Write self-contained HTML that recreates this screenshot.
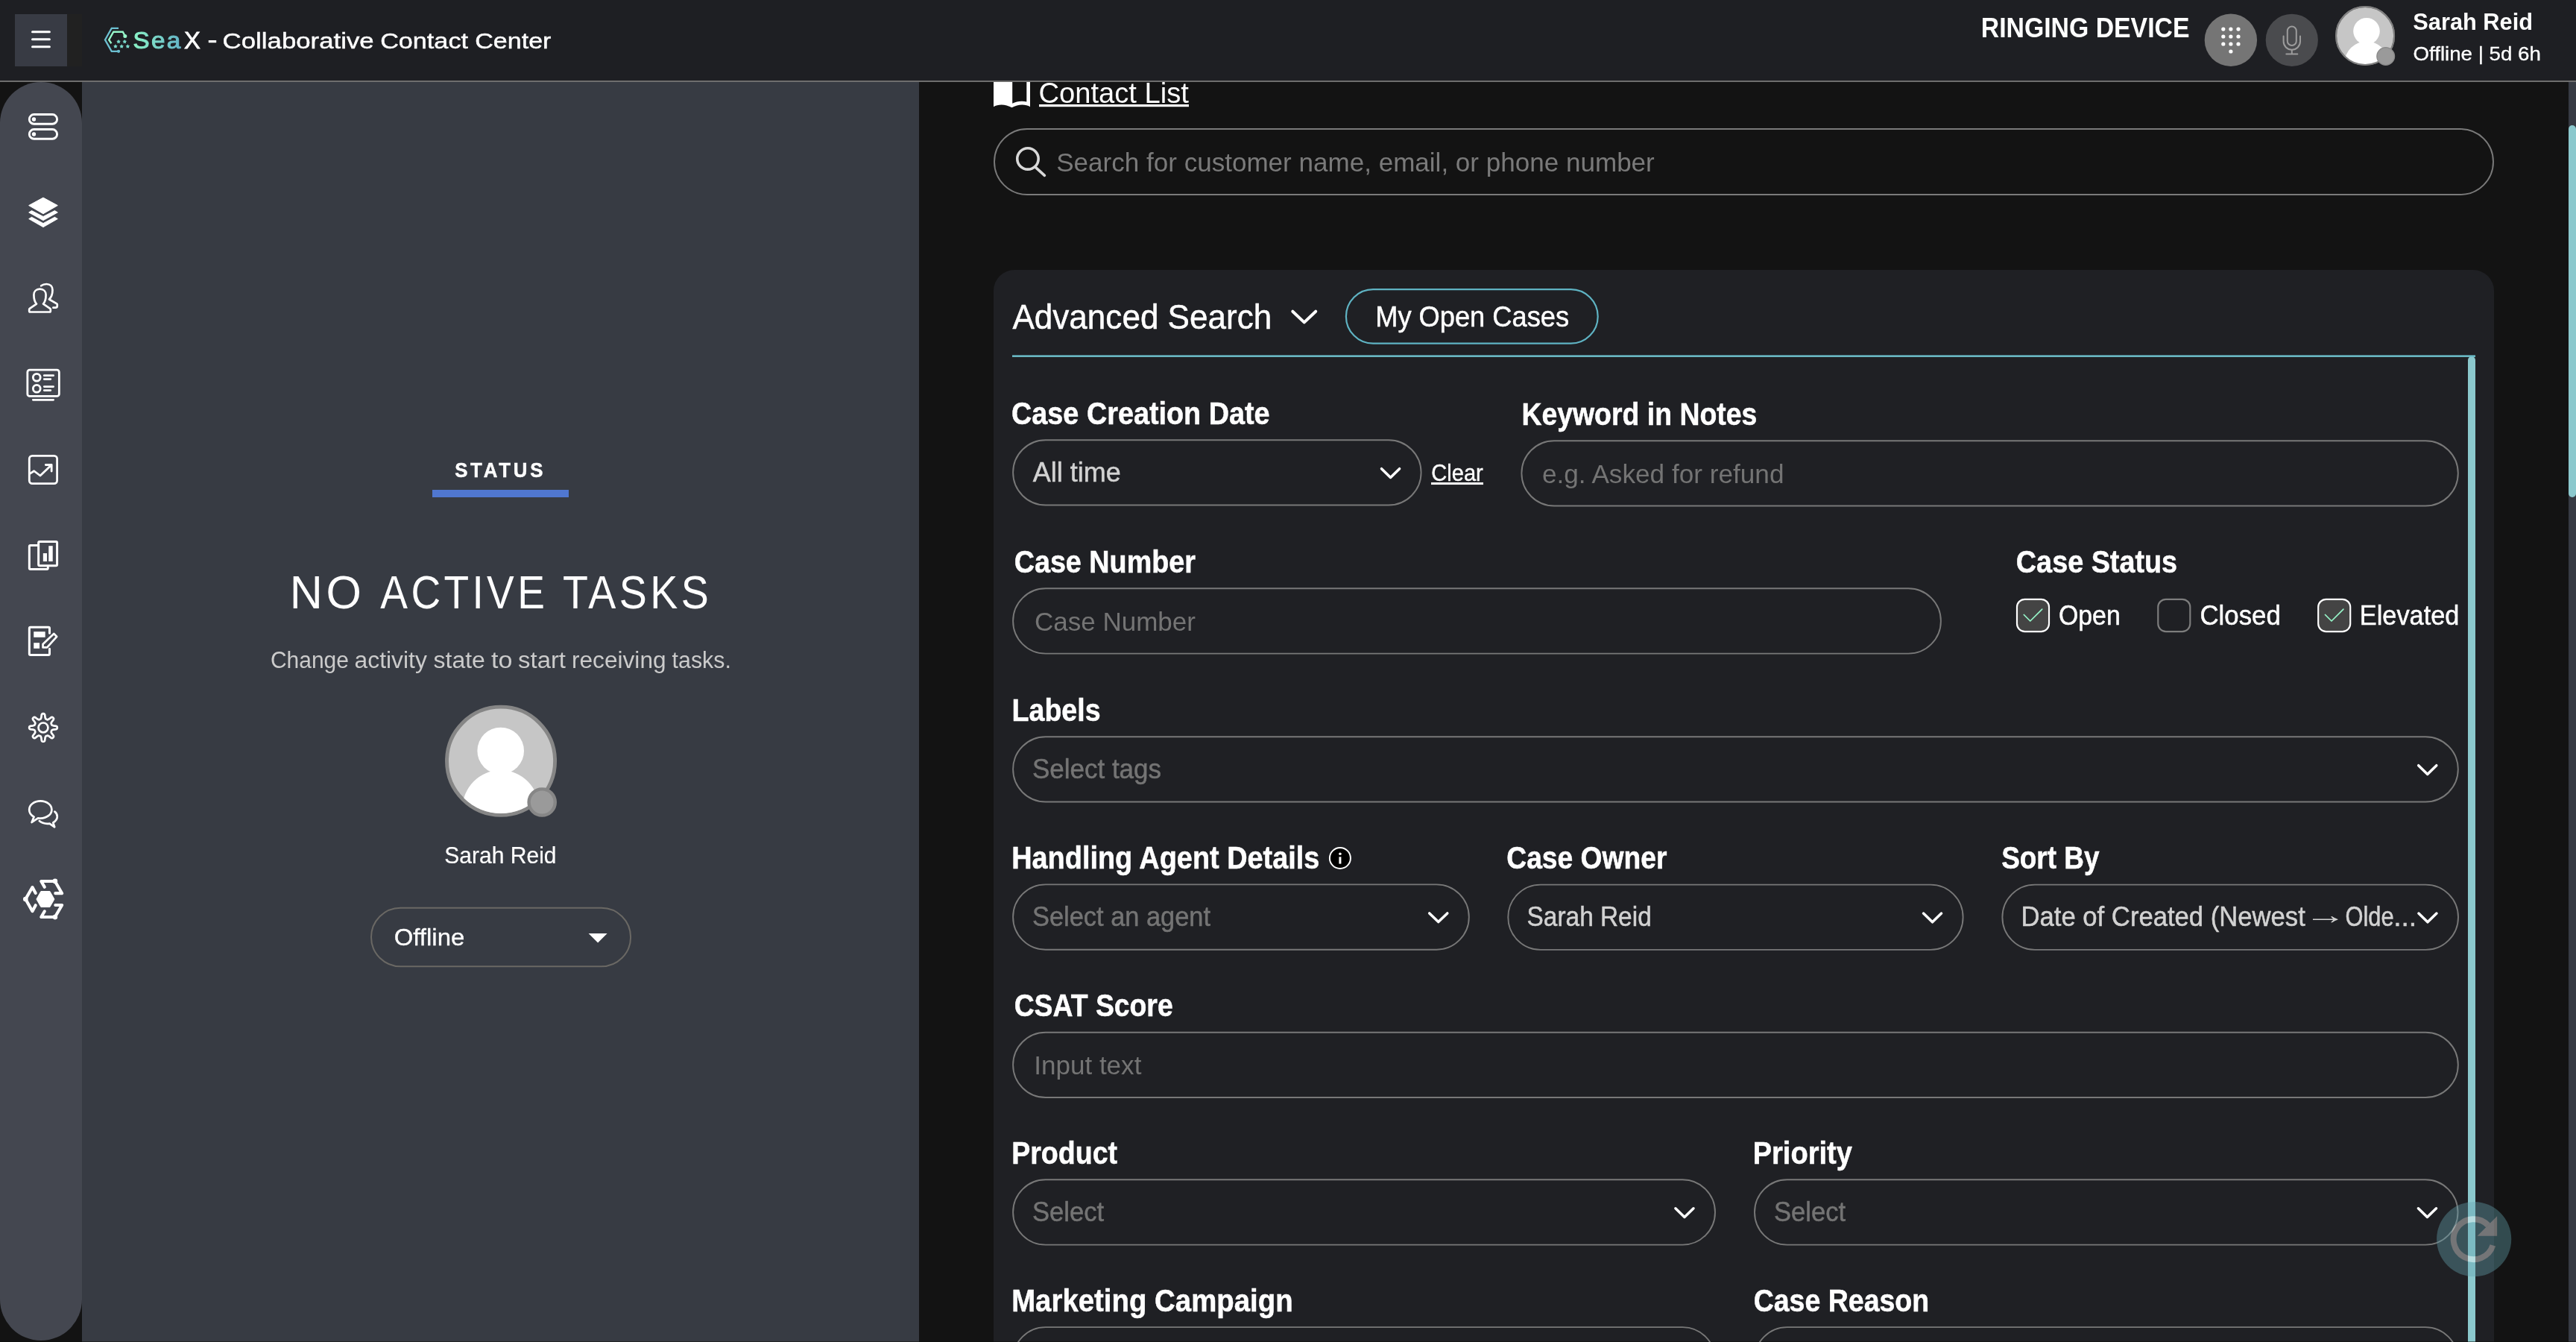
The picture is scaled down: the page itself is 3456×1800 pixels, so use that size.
<!DOCTYPE html>
<html><head><meta charset="utf-8"><title>SeaX - Collaborative Contact Center</title>
<style>
html,body{margin:0;padding:0}
body{width:3456px;height:1800px;overflow:hidden;background:#131313;position:relative;font-family:"Liberation Sans",sans-serif}
.b{position:absolute}
.t{position:absolute;left:0;top:0;white-space:pre;line-height:1;transform-origin:0 0;font-family:"Liberation Sans",sans-serif}
#ov{position:absolute;left:0;top:0}
</style></head><body>
<!-- right panel scrollbar -->
<div class="b" style="left:3446px;top:110px;width:10px;height:1690px;background:#363a43"></div>
<div class="b" style="left:3446px;top:168px;width:10px;height:499px;border-radius:5px;background:#8bc8cd"></div>
<!-- card -->
<div class="b" style="left:1333px;top:362px;width:2013px;height:1500px;border-radius:28px;background:#1f2024"></div>
<div class="b" style="left:3311px;top:478px;width:10px;height:1400px;border-radius:5px;background:#8bc8cd"></div>
<!-- left panel -->
<div class="b" style="left:110px;top:110px;width:1123px;height:1690px;background:#373b43"></div>
<div class="b" style="left:580px;top:657px;width:183px;height:10px;background:#5077d0"></div>
<!-- sidebar -->
<div class="b" style="left:0;top:110px;width:110px;height:1690px;background:#131313"></div>
<div class="b" style="left:0;top:110px;width:110px;height:1688px;border-radius:55px;background:#444750"></div>
<!-- header -->
<div class="b" style="left:0;top:0;width:3456px;height:108px;background:#1e1f23"></div>
<div class="b" style="left:0;top:108px;width:3456px;height:2px;background:#6e6e6e"></div>
<div class="b" style="left:20px;top:19px;width:70px;height:70px;background:#383b44"></div>
<div class="b" style="left:90px;top:19px;width:20px;height:70px;background:#212121"></div>
<div class="b" style="left:0;top:1799px;width:3456px;height:1px;background:rgba(12,14,8,.5)"></div>
<svg id="ov" width="3456" height="1800" viewBox="0 0 3456 1800" fill="none">
<line x1="43.5" y1="42.8" x2="66.4" y2="42.8" stroke="#fff" stroke-width="3" stroke-linecap="round"/>
<line x1="43.5" y1="52.7" x2="66.4" y2="52.7" stroke="#fff" stroke-width="3" stroke-linecap="round"/>
<line x1="43.5" y1="62.7" x2="66.4" y2="62.7" stroke="#fff" stroke-width="3" stroke-linecap="round"/>
<defs><linearGradient id="lg" x1="0" y1="0" x2="1" y2="0"><stop offset="0" stop-color="#8cf5c8"/><stop offset="1" stop-color="#64b4c8"/></linearGradient></defs>
<path d="M159.04 37.94 L149.74 37.94 L140.97 53.43 L149.74 68.8 L158.7 68.8" stroke="#6cbfd0" stroke-width="2.3" stroke-linejoin="miter"/>
<circle cx="159.04" cy="68.8" r="2.15" fill="#6cbfd0"/>
<path d="M167.8 48.42 L164.76 42.7 L152.24 42.7 L146.16 53.43 L149.38 58.25" stroke="#96f5c8" stroke-width="2.4" stroke-linejoin="miter"/>
<circle cx="167.8" cy="48.42" r="2.5" fill="#96f5c8"/>
<polygon points="159.04,52.90 160.03,54.44 161.80,54.90 160.64,56.32 160.74,58.15 159.04,57.48 157.34,58.15 157.44,56.32 156.28,54.90 158.05,54.44" fill="#78d7c8"/>
<polygon points="167.26,52.90 168.25,54.44 170.02,54.90 168.86,56.32 168.96,58.15 167.26,57.48 165.56,58.15 165.66,56.32 164.50,54.90 166.27,54.44" fill="#78d7c8"/>
<polygon points="154.92,59.35 155.91,60.89 157.68,61.35 156.52,62.77 156.62,64.60 154.92,63.93 153.22,64.60 153.32,62.77 152.16,61.35 153.93,60.89" fill="#78d7c8"/>
<polygon points="163.15,59.35 164.14,60.89 165.91,61.35 164.75,62.77 164.85,64.60 163.15,63.93 161.45,64.60 161.55,62.77 160.39,61.35 162.16,60.89" fill="#78d7c8"/>
<polygon points="171.37,59.35 172.36,60.89 174.13,61.35 172.97,62.77 173.07,64.60 171.37,63.93 169.67,64.60 169.77,62.77 168.61,61.35 170.38,60.89" fill="#78d7c8"/>
<rect x="279.75" y="53.9" width="10.45" height="3.4" rx="0.6" fill="#fff"/>
<circle cx="2992.9" cy="53.8" r="35.2" fill="#757575"/>
<circle cx="2982.8" cy="39.1" r="2.6" fill="#fff"/>
<circle cx="2982.8" cy="49.0" r="2.6" fill="#fff"/>
<circle cx="2982.8" cy="59.0" r="2.6" fill="#fff"/>
<circle cx="2992.9" cy="39.1" r="2.6" fill="#fff"/>
<circle cx="2992.9" cy="49.0" r="2.6" fill="#fff"/>
<circle cx="2992.9" cy="59.0" r="2.6" fill="#fff"/>
<circle cx="3003.0" cy="39.1" r="2.6" fill="#fff"/>
<circle cx="3003.0" cy="49.0" r="2.6" fill="#fff"/>
<circle cx="3003.0" cy="59.0" r="2.6" fill="#fff"/>
<circle cx="2992.9" cy="69" r="2.6" fill="#fff"/>
<circle cx="3074.8" cy="53.8" r="35.1" fill="#4a4b4e"/>
<g stroke="#9c9c9c" stroke-width="2" stroke-linecap="round"><rect x="3068.8" y="35.5" width="12" height="25.5" rx="6"/><path d="M3063.6 48.5 L3063.6 55.5 A11.2 11.2 0 0 0 3086 55.5 L3086 48.5"/><path d="M3074.8 67 L3074.8 72.5 M3067.3 72.5 L3082.3 72.5"/></g>
<defs><clipPath id="c1"><circle cx="3173.1" cy="48" r="39"/></clipPath><clipPath id="c2"><circle cx="672.05" cy="1020.7" r="70.3"/></clipPath></defs>
<circle cx="3173.1" cy="48" r="39" fill="#c6c6c6" stroke="#808080" stroke-width="2"/>
<g clip-path="url(#c1)"><circle cx="3175" cy="41.8" r="17.8" fill="#fff"/><ellipse cx="3175" cy="84.5" rx="29.5" ry="29" fill="#fff"/></g>
<circle cx="3173.1" cy="48" r="39" stroke="#808080" stroke-width="2"/>
<circle cx="3200.7" cy="75.5" r="11.8" fill="#9a9a9a" stroke="#8b8b8b" stroke-width="1.4"/>
<circle cx="672.05" cy="1020.7" r="72.55" fill="#c6c6c6" stroke="#868686" stroke-width="4.9"/>
<g clip-path="url(#c2)"><circle cx="671.7" cy="1007" r="31.3" fill="#fff"/><ellipse cx="671.8" cy="1085" rx="51.5" ry="52" fill="#fff"/></g>
<circle cx="727.2" cy="1076" r="17.6" fill="#9a9a9a" stroke="#868686" stroke-width="4.4"/>
<rect x="498" y="1217.7" width="348.1" height="78.6" rx="39.3" stroke="#6a6864" stroke-width="2"/>
<polygon points="789.6,1251.9 814.6,1251.9 802.1,1264.4" fill="#fff"/>
<rect x="39.3" y="153.55" width="37.3" height="12.7" rx="6.35" stroke="#fff" stroke-width="2.9"/>
<circle cx="45.45" cy="160.0" r="2.7" fill="#fff"/>
<rect x="39.3" y="173.55" width="37.3" height="12.7" rx="6.35" stroke="#fff" stroke-width="2.9"/>
<circle cx="45.45" cy="179.95" r="2.7" fill="#fff"/>
<g fill="#fff" stroke="#fff" stroke-width="1" stroke-linejoin="round"><polygon points="57.98,265.1 77.3,275.6 57.98,286.7 38.65,275.6"/><polygon points="38.7,284.9 42.5,282.6 57.98,290.5 73.4,282.6 77.3,284.9 57.98,295.6"/><polygon points="38.7,293.55 42.5,291.3 57.98,299.6 73.4,291.3 77.3,293.55 57.98,304.6"/></g>
<g stroke="#fff" stroke-linecap="round" stroke-linejoin="round" stroke-width="2.7"><path d="M53.5 387.7 C48.5 387.7 45.4 391 45.4 395.5 C45.4 401 46.6 405 49 407.6 L39.8 413.9 Q39.2 414.3 39.2 415 L39.2 417.3 Q39.2 418.5 40.4 418.5 L66.6 418.5 Q67.8 418.5 67.8 417.3 L67.8 415 Q67.8 414.3 67.2 413.9 L58 407.6 C60.4 405 61.6 401 61.6 395.5 C61.6 391 58.5 387.7 53.5 387.7 Z"/><path d="M55.2 383.3 C57.2 381.7 59.6 381 62.4 381 C67.5 381 70.5 384.5 70.5 389 C70.5 394.5 69 398.5 66 401.5 L76.2 407.3 Q76.8 407.7 76.8 408.5 L76.8 410.3 Q76.8 412.7 74.5 412.7 L71.4 412.7"/></g>
<g stroke="#fff" stroke-linecap="round" stroke-linejoin="round" stroke-width="2.8"><rect x="36.85" y="496.2" width="42.5" height="35.2" rx="3"/><circle cx="49.26" cy="506.24" r="4.9"/><circle cx="49.26" cy="521.2" r="4.9"/><path d="M59.3 503.7 L71.6 503.7 M59.3 508.6 L67.8 508.6 M59.3 518.6 L71.6 518.6 M59.3 523.55 L67.8 523.55 M44.3 536.3 L71.6 536.3"/></g>
<g stroke="#fff" stroke-linecap="round" stroke-linejoin="round" stroke-width="2.8"><rect x="39.3" y="611.3" width="37.3" height="37.3" rx="4"/><path d="M39.6 635.6 L45.7 631.75 L53.95 638 L69.16 623.5 M61.3 623.5 L69.16 623.5 L69.16 632"/></g>
<g stroke="#fff" stroke-linecap="round" stroke-linejoin="round" stroke-width="3"><rect x="51.65" y="726.4" width="24.95" height="32.3" rx="1.5"/><path d="M50.15 731.5 L40.85 731.5 Q39.35 731.5 39.35 733 L39.35 762.1 Q39.35 763.6 40.85 763.6 L62.8 763.6 Q64.3 763.6 64.3 762.1 L64.3 760.4"/></g>
<rect x="57.84" y="742.06" width="5.2" height="10.95" fill="#fff"/><rect x="65.27" y="732.2" width="5.45" height="20.8" fill="#fff"/>
<g stroke="#fff" stroke-linecap="round" stroke-linejoin="round" stroke-width="3"><path d="M66.5 849.3 L66.5 842.8 Q66.5 841.3 65 841.3 L40.85 841.3 Q39.35 841.3 39.35 842.8 L39.35 877.1 Q39.35 878.6 40.85 878.6 L65 878.6 Q66.5 878.6 66.5 877.1 L66.5 870.3"/></g>
<path stroke="#fff" stroke-linecap="round" stroke-linejoin="round" stroke-width="2.7" d="M57.55 868.45 L57.55 863.9 L72.3 850 L76.2 853.9 L63.2 868.45 Z"/>
<rect x="45.23" y="847.2" width="15.43" height="7.6" fill="#fff"/><rect x="45.23" y="862.2" width="7.83" height="7.6" fill="#fff"/>
<path stroke="#fff" stroke-linecap="round" stroke-linejoin="round" stroke-width="2.7" d="M53.43 964.96 L54.72 964.19 L55.35 962.40 L55.84 958.48 L56.59 957.40 L57.98 957.10 L59.37 957.40 L60.12 958.48 L60.61 962.40 L61.24 964.19 L62.53 964.96 L63.99 965.33 L65.70 964.51 L68.82 962.08 L70.11 961.85 L71.31 962.62 L72.08 963.82 L71.85 965.11 L69.42 968.23 L68.60 969.94 L68.97 971.40 L69.74 972.69 L71.53 973.32 L75.45 973.81 L76.53 974.56 L76.83 975.95 L76.53 977.34 L75.45 978.09 L71.53 978.58 L69.74 979.21 L68.97 980.50 L68.60 981.96 L69.42 983.67 L71.85 986.79 L72.08 988.08 L71.31 989.28 L70.11 990.05 L68.82 989.82 L65.70 987.39 L63.99 986.57 L62.53 986.94 L61.24 987.71 L60.61 989.50 L60.12 993.42 L59.37 994.50 L57.98 994.80 L56.59 994.50 L55.84 993.42 L55.35 989.50 L54.72 987.71 L53.43 986.94 L51.97 986.57 L50.26 987.39 L47.14 989.82 L45.85 990.05 L44.65 989.28 L43.88 988.08 L44.11 986.79 L46.54 983.67 L47.36 981.96 L46.99 980.50 L46.22 979.21 L44.43 978.58 L40.51 978.09 L39.43 977.34 L39.13 975.95 L39.43 974.56 L40.51 973.81 L44.43 973.32 L46.22 972.69 L46.99 971.40 L47.36 969.94 L46.54 968.23 L44.11 965.11 L43.88 963.82 L44.65 962.62 L45.85 961.85 L47.14 962.08 L50.26 964.51 L51.97 965.33 Z"/>
<circle cx="57.98" cy="975.95" r="6.45" stroke="#fff" stroke-width="2.7"/>
<g stroke="#fff" stroke-linecap="round" stroke-linejoin="round" stroke-width="2.7"><path d="M45.6 1095.6 C41.5 1093.4 39.2 1090 39.2 1085.9 C39.2 1079.5 45.9 1074.3 54.3 1074.3 C62.6 1074.3 69.4 1079.5 69.4 1085.9 C69.4 1092.4 62.6 1097.6 54.3 1097.6 C53.2 1097.6 52.1 1097.5 51 1097.3 L42.6 1103 Z"/><path d="M73.4 1088.6 C76 1090.5 76.8 1093 76.8 1095.3 C76.8 1098.5 74.6 1101.5 71.2 1103.4 L73.2 1109.3 L66.5 1104.7 C60.5 1105.4 56 1104 52.8 1101.1"/></g>
<polygon points="48.9,1206.05 54.9,1195.5 66.9,1195.5 72.9,1206.05 66.9,1216.6 54.9,1216.6" fill="#fff" stroke="#fff" stroke-width="1" stroke-linejoin="round"/>
<g stroke="#fff" stroke-linecap="round" stroke-linejoin="round" stroke-width="4.1"><path d="M47.75 1197.9 L43.46 1190.1 L34.3 1206.05 L43.46 1222.2 L47.75 1214.26"/><path d="M59.82 1189.85 L55.26 1182.07 L73.77 1182.07 L83.16 1198.17 L74.3 1198.17"/><path d="M59.82 1222.3 L55.26 1229.98 L73.77 1229.98 L83.16 1214 L74.3 1214"/></g>
<circle cx="34.3" cy="1206.05" r="3.3" fill="#fff"/><circle cx="73.9" cy="1181.9" r="3.3" fill="#fff"/><circle cx="73.9" cy="1230.1" r="3.3" fill="#fff"/>
<path d="M1333 110 L1382 110 L1382 143.2 C1376 139.4 1366 139.2 1357.5 144.3 C1349 139.2 1339 139.4 1333 143.2 Z M1358.2 110 L1358.2 138.7 C1364 135.7 1371 135 1377.3 136.4 L1377.3 110 Z" fill="#fff" fill-rule="evenodd"/>
<rect x="1394" y="140" width="201" height="3.2" fill="#fff"/>
<rect x="1334" y="173" width="2011" height="88" rx="44" stroke="#7a7a7a" stroke-width="1.9"/>
<g stroke="#d8d8d8" stroke-width="3.6" stroke-linecap="round"><circle cx="1378.95" cy="212.95" r="14.2"/><path d="M1389.3 224.3 L1401.4 235.4"/></g>
<path d="M1734.3 417.7 L1749.75 432.4 L1765.2 417.7" stroke="#fff" stroke-width="4" stroke-linecap="round" stroke-linejoin="round"/>
<rect x="1805.9" y="388.2" width="337.8" height="72.5" rx="36.25" stroke="#5fb3c3" stroke-width="2.2"/>
<rect x="1920" y="647.05" width="70" height="3" fill="#fff"/>
<rect x="1359.1" y="590.2" width="547.5" height="87.3" rx="43.65" stroke="#787878" stroke-width="1.9"/>
<path d="M1853.5 628.7 L1865.55 640.4 L1877.6 628.7" stroke="#fff" stroke-width="3.5" stroke-linecap="round" stroke-linejoin="round"/>
<rect x="2041.4" y="591.2" width="1256.4" height="87.3" rx="43.65" stroke="#787878" stroke-width="1.9"/>
<rect x="1359.1" y="789.3" width="1244.8" height="87.3" rx="43.65" stroke="#787878" stroke-width="1.9"/>
<rect x="1359.1" y="988.2" width="1938.7" height="87.3" rx="43.65" stroke="#787878" stroke-width="1.9"/>
<path d="M3244.7 1026.7 L3256.75 1038.4 L3268.8 1026.7" stroke="#fff" stroke-width="3.5" stroke-linecap="round" stroke-linejoin="round"/>
<rect x="1359.1" y="1186.4" width="611.7" height="87.3" rx="43.65" stroke="#787878" stroke-width="1.9"/>
<path d="M1917.7 1224.9 L1929.75 1236.6 L1941.8 1224.9" stroke="#fff" stroke-width="3.5" stroke-linecap="round" stroke-linejoin="round"/>
<rect x="2023.3" y="1186.6" width="610.3" height="87.3" rx="43.65" stroke="#787878" stroke-width="1.9"/>
<path d="M2580.5 1225.1 L2592.55 1236.8 L2604.6 1225.1" stroke="#fff" stroke-width="3.5" stroke-linecap="round" stroke-linejoin="round"/>
<rect x="2686.4" y="1186.6" width="611.6" height="87.3" rx="43.65" stroke="#787878" stroke-width="1.9"/>
<path d="M3244.9 1225.1 L3256.95 1236.8 L3269.0 1225.1" stroke="#fff" stroke-width="3.5" stroke-linecap="round" stroke-linejoin="round"/>
<rect x="1359.1" y="1384.7" width="1938.7" height="87.3" rx="43.65" stroke="#787878" stroke-width="1.9"/>
<rect x="1359.1" y="1582.3" width="941.9" height="87.3" rx="43.65" stroke="#787878" stroke-width="1.9"/>
<path d="M2247.9 1620.8 L2259.95 1632.5 L2272.0 1620.8" stroke="#fff" stroke-width="3.5" stroke-linecap="round" stroke-linejoin="round"/>
<rect x="2354.0" y="1582.3" width="943.5" height="87.3" rx="43.65" stroke="#787878" stroke-width="1.9"/>
<path d="M3244.4 1620.8 L3256.45 1632.5 L3268.5 1620.8" stroke="#fff" stroke-width="3.5" stroke-linecap="round" stroke-linejoin="round"/>
<rect x="1359.1" y="1780.1" width="941.9" height="87.3" rx="43.65" stroke="#787878" stroke-width="1.9"/>
<path d="M2247.9 1818.6 L2259.95 1830.3 L2272.0 1818.6" stroke="#fff" stroke-width="3.5" stroke-linecap="round" stroke-linejoin="round"/>
<rect x="2354.0" y="1780.1" width="943.5" height="87.3" rx="43.65" stroke="#787878" stroke-width="1.9"/>
<path d="M3244.4 1818.6 L3256.45 1830.3 L3268.5 1818.6" stroke="#fff" stroke-width="3.5" stroke-linecap="round" stroke-linejoin="round"/>
<rect x="2705.98" y="803.8" width="43.05" height="43.25" rx="10.5" fill="#444" stroke="#fff" stroke-width="2.15"/>
<path d="M2715.3 824.5 L2723.8 833 L2739.7 817.1" stroke="#96f5c8" stroke-width="1.75" stroke-linecap="round" stroke-linejoin="round"/>
<rect x="2895.28" y="803.8" width="43.05" height="43.25" rx="10.5" stroke="#7d7d7d" stroke-width="2.15"/>
<rect x="3110.18" y="803.8" width="43.05" height="43.25" rx="10.5" fill="#444" stroke="#fff" stroke-width="2.15"/>
<path d="M3119.5 824.5 L3128.0 833 L3143.9 817.1" stroke="#96f5c8" stroke-width="1.75" stroke-linecap="round" stroke-linejoin="round"/>
<circle cx="1797.9" cy="1151" r="14" fill="#000" stroke="#fff" stroke-width="2"/><circle cx="1797.9" cy="1145.3" r="1.8" fill="#fff"/><rect x="1796.4" y="1149.3" width="3" height="9.3" fill="#fff"/>
<g opacity="0.38"><circle cx="3319.15" cy="1662.1" r="50.1" fill="#66a6b2"/><path d="M3338.07 1643.4 A27 27 0 1 0 3344.4 1670.4" stroke="#fff" stroke-width="7.9"/><polygon points="3350.1,1631.2 3350.1,1657.75 3323.6,1657.75" fill="#fff"/></g>
<rect x="1358" y="476.4" width="1963" height="2.5" fill="#6dbfcb"/>
</svg>
<div id="tx" style="position:absolute;left:0;top:0;width:3456px;height:1800px;will-change:transform">
<span class="t" style="font-weight:400;font-size:31.8px;-webkit-text-fill-color:transparent;background:linear-gradient(90deg,#8cf5c8,#64b4c8);-webkit-background-clip:text;background-clip:text;letter-spacing:2.2px;-webkit-text-stroke:1.1px transparent;transform:translate(178.59px,38.90px) scaleX(1.0442)">Sea</span>
<span class="t" style="font-weight:400;font-size:32.2px;color:#fff;-webkit-text-stroke:0.8px #fff;transform:translate(246.97px,38.10px) scaleX(1.0169)">X</span>
<span class="t" style="font-weight:400;font-size:30.2px;color:#fff;-webkit-text-stroke:0.45px #fff;transform:translate(298.60px,40.30px) scaleX(1.1527)">Collaborative</span>
<span class="t" style="font-weight:400;font-size:30.2px;color:#fff;-webkit-text-stroke:0.45px #fff;transform:translate(510.13px,40.30px) scaleX(1.1329)">Contact</span>
<span class="t" style="font-weight:400;font-size:30.2px;color:#fff;-webkit-text-stroke:0.45px #fff;transform:translate(637.24px,40.30px) scaleX(1.1278)">Center</span>
<span class="t" style="font-weight:700;font-size:36.3px;color:#fff;transform:translate(2657.76px,20.05px) scaleX(0.9308)">RINGING DEVICE</span>
<span class="t" style="font-weight:700;font-size:30.7px;color:#fff;transform:translate(3237.28px,15.05px) scaleX(1.0028)">Sarah Reid</span>
<span class="t" style="font-weight:400;font-size:25.8px;color:#fff;-webkit-text-stroke:0.3px #fff;transform:translate(3237.44px,59.80px) scaleX(1.0740)">Offline | 5d 6h</span>
<span class="t" style="font-weight:700;font-size:27.3px;color:#fff;letter-spacing:4px;-webkit-text-stroke:0.5px #fff;transform:translate(610.13px,617.20px) scaleX(0.9454)">STATUS</span>
<span class="t" style="font-weight:400;font-size:63px;color:#fff;letter-spacing:5px;transform:translate(388.72px,763.10px) scaleX(0.9676)">NO</span>
<span class="t" style="font-weight:400;font-size:63px;color:#fff;letter-spacing:5px;transform:translate(510.35px,763.10px) scaleX(0.8731)">ACTIVE</span>
<span class="t" style="font-weight:400;font-size:63px;color:#fff;letter-spacing:5px;transform:translate(755.09px,763.10px) scaleX(0.8814)">TASKS</span>
<span class="t" style="font-weight:400;font-size:30.8px;color:#cbcbcb;transform:translate(362.91px,870.80px) scaleX(0.9733)">Change</span>
<span class="t" style="font-weight:400;font-size:30.8px;color:#cbcbcb;transform:translate(475.62px,870.80px) scaleX(1.0329)">activity</span>
<span class="t" style="font-weight:400;font-size:30.8px;color:#cbcbcb;transform:translate(581.50px,870.80px) scaleX(1.0390)">state</span>
<span class="t" style="font-weight:400;font-size:30.8px;color:#cbcbcb;transform:translate(658.91px,870.80px) scaleX(1.1071)">to</span>
<span class="t" style="font-weight:400;font-size:30.8px;color:#cbcbcb;transform:translate(695.06px,870.80px) scaleX(1.0677)">start</span>
<span class="t" style="font-weight:400;font-size:30.8px;color:#cbcbcb;transform:translate(766.99px,870.80px) scaleX(1.0272)">receiving</span>
<span class="t" style="font-weight:400;font-size:30.8px;color:#cbcbcb;transform:translate(901.56px,870.80px) scaleX(0.9859)">tasks.</span>
<span class="t" style="font-weight:400;font-size:30.5px;color:#fff;-webkit-text-stroke:0.2px #fff;transform:translate(596.33px,1132.00px) scaleX(0.9843)">Sarah Reid</span>
<span class="t" style="font-weight:400;font-size:30.8px;color:#fff;-webkit-text-stroke:0.3px #fff;transform:translate(528.65px,1242.70px) scaleX(1.0704)">Offline</span>
<span class="t" style="font-weight:400;font-size:38.5px;color:#fff;transform:translate(1393.48px,105.90px) scaleX(0.9909)">Contact List</span>
<span class="t" style="font-weight:400;font-size:35.2px;color:#7a7a7a;transform:translate(1417.22px,199.60px) scaleX(0.9960)">Search for customer name, email, or phone number</span>
<span class="t" style="font-weight:400;font-size:46.7px;color:#fff;-webkit-text-stroke:0.5px #fff;transform:translate(1358.46px,401.80px) scaleX(0.9435)">Advanced Search</span>
<span class="t" style="font-weight:400;font-size:39px;color:#fff;-webkit-text-stroke:0.5px #fff;transform:translate(1845.21px,404.90px) scaleX(0.9292)">My Open Cases</span>
<span class="t" style="font-weight:700;font-size:41.8px;color:#fff;-webkit-text-stroke:0.5px #fff;transform:translate(1357.03px,534.10px) scaleX(0.9043)">Case Creation Date</span>
<span class="t" style="font-weight:700;font-size:41.8px;color:#fff;-webkit-text-stroke:0.5px #fff;transform:translate(2041.40px,535.10px) scaleX(0.8949)">Keyword in Notes</span>
<span class="t" style="font-weight:700;font-size:41.8px;color:#fff;-webkit-text-stroke:0.5px #fff;transform:translate(1360.63px,733.20px) scaleX(0.9030)">Case Number</span>
<span class="t" style="font-weight:700;font-size:41.8px;color:#fff;-webkit-text-stroke:0.5px #fff;transform:translate(2704.83px,733.20px) scaleX(0.9039)">Case Status</span>
<span class="t" style="font-weight:700;font-size:41.8px;color:#fff;-webkit-text-stroke:0.5px #fff;transform:translate(1357.59px,932.10px) scaleX(0.8982)">Labels</span>
<span class="t" style="font-weight:700;font-size:41.8px;color:#fff;-webkit-text-stroke:0.5px #fff;transform:translate(1357.17px,1130.30px) scaleX(0.9064)">Handling Agent Details</span>
<span class="t" style="font-weight:700;font-size:41.8px;color:#fff;-webkit-text-stroke:0.5px #fff;transform:translate(2021.25px,1130.30px) scaleX(0.8905)">Case Owner</span>
<span class="t" style="font-weight:700;font-size:41.8px;color:#fff;-webkit-text-stroke:0.5px #fff;transform:translate(2685.16px,1130.30px) scaleX(0.8835)">Sort By</span>
<span class="t" style="font-weight:700;font-size:41.8px;color:#fff;-webkit-text-stroke:0.5px #fff;transform:translate(1360.64px,1328.30px) scaleX(0.8933)">CSAT Score</span>
<span class="t" style="font-weight:700;font-size:41.8px;color:#fff;-webkit-text-stroke:0.5px #fff;transform:translate(1357.19px,1526.20px) scaleX(0.8986)">Product</span>
<span class="t" style="font-weight:700;font-size:41.8px;color:#fff;-webkit-text-stroke:0.5px #fff;transform:translate(2351.66px,1526.20px) scaleX(0.9103)">Priority</span>
<span class="t" style="font-weight:700;font-size:41.8px;color:#fff;-webkit-text-stroke:0.5px #fff;transform:translate(1357.14px,1724.00px) scaleX(0.9182)">Marketing Campaign</span>
<span class="t" style="font-weight:700;font-size:41.8px;color:#fff;-webkit-text-stroke:0.5px #fff;transform:translate(2352.64px,1724.00px) scaleX(0.8972)">Case Reason</span>
<span class="t" style="font-weight:400;font-size:36.3px;color:#d2d2d2;-webkit-text-stroke:0.5px #d2d2d2;transform:translate(1385.86px,615.90px) scaleX(0.9900)">All time</span>
<span class="t" style="font-weight:400;font-size:31.7px;color:#fff;-webkit-text-stroke:0.4px #fff;transform:translate(1920.23px,618.85px) scaleX(0.9180)">Clear</span>
<span class="t" style="font-weight:400;font-size:35.2px;color:#747474;transform:translate(2068.92px,618.20px) scaleX(0.9994)">e.g. Asked for refund</span>
<span class="t" style="font-weight:400;font-size:35.2px;color:#747474;transform:translate(1387.99px,816.10px) scaleX(0.9948)">Case Number</span>
<span class="t" style="font-weight:400;font-size:36.3px;color:#fff;-webkit-text-stroke:0.5px #fff;transform:translate(2761.98px,807.60px) scaleX(0.9318)">Open</span>
<span class="t" style="font-weight:400;font-size:36.3px;color:#fff;-webkit-text-stroke:0.5px #fff;transform:translate(2951.43px,807.60px) scaleX(0.9585)">Closed</span>
<span class="t" style="font-weight:400;font-size:36.3px;color:#fff;-webkit-text-stroke:0.5px #fff;transform:translate(3165.82px,807.60px) scaleX(0.9453)">Elevated</span>
<span class="t" style="font-weight:400;font-size:36.3px;color:#747474;-webkit-text-stroke:0.5px #747474;transform:translate(1385.05px,1013.90px) scaleX(0.9630)">Select tags</span>
<span class="t" style="font-weight:400;font-size:36.3px;color:#747474;-webkit-text-stroke:0.5px #747474;transform:translate(1385.07px,1212.10px) scaleX(0.9470)">Select an agent</span>
<span class="t" style="font-weight:400;font-size:36.3px;color:#d2d2d2;-webkit-text-stroke:0.5px #d2d2d2;transform:translate(2048.57px,1212.10px) scaleX(0.9204)">Sarah Reid</span>
<span class="t" style="font-weight:400;font-size:36.3px;color:#d2d2d2;-webkit-text-stroke:0.5px #d2d2d2;transform:translate(2711.54px,1212.10px) scaleX(0.9545)">Date of Created (Newest</span>
<span class="t" style="font-weight:400;font-size:35px;color:#d2d2d2;transform:translate(3091.43px,1208.90px) scaleX(1.6187)">→</span>
<span class="t" style="font-weight:400;font-size:36.3px;color:#d2d2d2;-webkit-text-stroke:0.5px #d2d2d2;transform:translate(3146.52px,1212.10px) scaleX(0.8495)">Olde</span>
<span class="t" style="font-weight:400;font-size:36.3px;color:#d2d2d2;-webkit-text-stroke:0.5px #d2d2d2;transform:translate(3211.18px,1212.10px) scaleX(1.0256)">...</span>
<span class="t" style="font-weight:400;font-size:35.2px;color:#747474;transform:translate(1387.16px,1411.20px) scaleX(0.9964)">Input text</span>
<span class="t" style="font-weight:400;font-size:36.3px;color:#747474;-webkit-text-stroke:0.5px #747474;transform:translate(1385.06px,1608.00px) scaleX(0.9526)">Select</span>
<span class="t" style="font-weight:400;font-size:36.3px;color:#747474;-webkit-text-stroke:0.5px #747474;transform:translate(2380.06px,1608.00px) scaleX(0.9526)">Select</span>
</div>
</body></html>
